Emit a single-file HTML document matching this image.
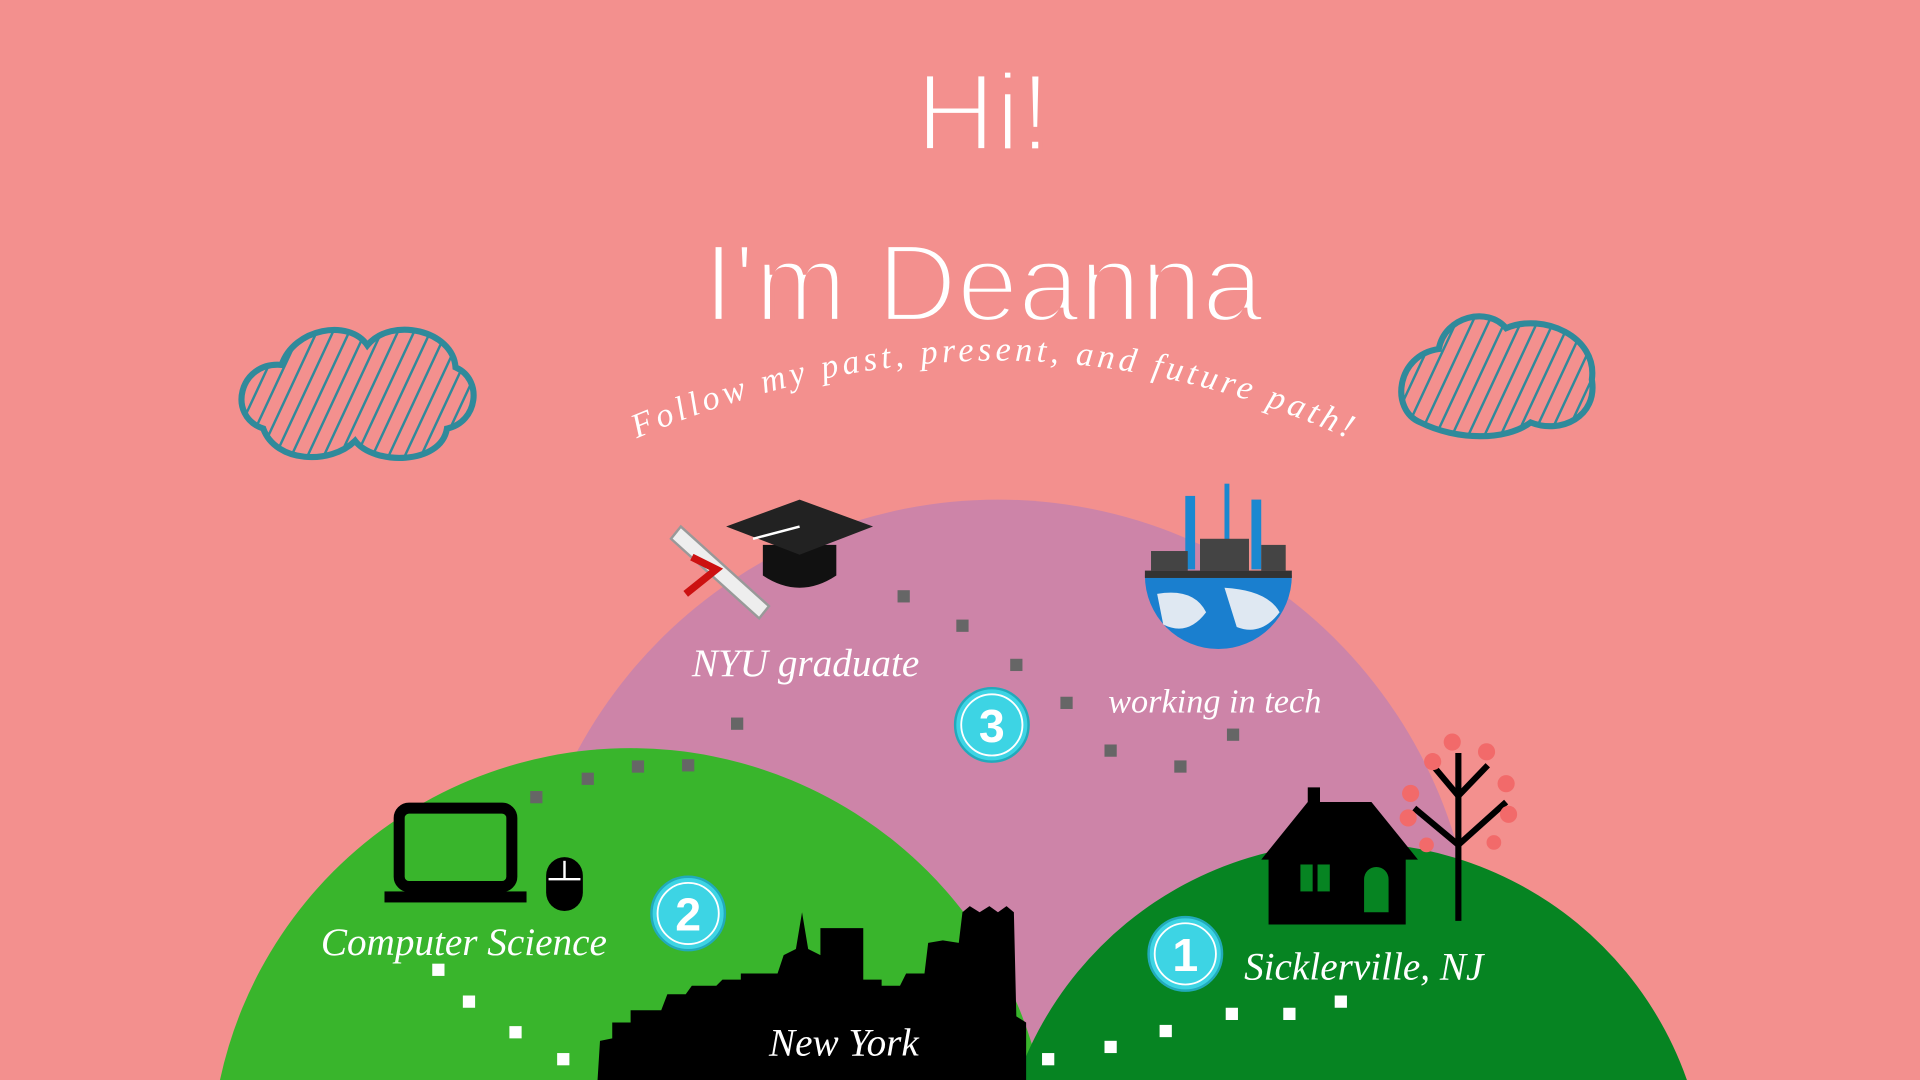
<!DOCTYPE html>
<html><head><meta charset="utf-8"><style>
html,body{margin:0;padding:0;width:1920px;height:1080px;overflow:hidden;background:#f3908e}
svg{display:block}
</style></head><body>
<svg width="1920" height="1080" viewBox="0 0 1568 882" xmlns="http://www.w3.org/2000/svg" style="position:absolute;left:0;top:0">
<defs>
<pattern id="hatch" width="12" height="12" patternUnits="userSpaceOnUse" patternTransform="rotate(25)">
<rect width="12" height="12" fill="#f3908e"/><line x1="0" y1="0" x2="0" y2="12" stroke="#2f8a9b" stroke-width="4"/>
</pattern>
<path id="arc" d="M520,358 Q820,230 1105,360"/>
</defs>
<rect width="1568" height="882" fill="#f3908e"/>
<circle cx="815" cy="798" r="390" fill="#cd84a8"/>
<circle cx="515" cy="954" r="343" fill="#39b52c"/>
<circle cx="1104" cy="978" r="290" fill="#068422"/>
<g font-family="Liberation Sans, sans-serif" fill="#fff" stroke="#f3908e" stroke-width="3.5" text-anchor="middle">
<text x="803" y="123" font-size="90">Hi!</text>
<text x="803" y="262" font-size="90">I'm Deanna</text>
</g>
<text font-family="Liberation Serif, serif" font-style="italic" font-size="28" fill="#fff" letter-spacing="1"><textPath href="#arc" textLength="600">Follow  my  past,  present,  and  future path!</textPath></text>
<g stroke="#2f8a9b" stroke-width="5" fill="url(#hatch)">
<path d="M215,350 C185,340 195,295 230,298 C240,268 285,260 300,282 C320,258 370,270 372,300 C395,310 390,345 365,350 C360,380 305,380 290,360 C270,380 225,378 215,350 Z"/>
<path d="M1160,345 C1135,335 1140,290 1175,285 C1180,258 1215,250 1230,268 C1260,255 1305,275 1300,310 C1305,340 1275,355 1250,345 C1230,360 1190,360 1160,345 Z"/>
</g>
<g fill="#666">
<rect x="733" y="482" width="10" height="10"/><rect x="781" y="506" width="10" height="10"/><rect x="825" y="538" width="10" height="10"/><rect x="866" y="569" width="10" height="10"/><rect x="902" y="608" width="10" height="10"/><rect x="959" y="621" width="10" height="10"/><rect x="1002" y="595" width="10" height="10"/><rect x="597" y="586" width="10" height="10"/><rect x="557" y="620" width="10" height="10"/><rect x="516" y="621" width="10" height="10"/><rect x="475" y="631" width="10" height="10"/><rect x="433" y="646" width="10" height="10"/>
</g>
<g fill="#fff">
<rect x="353" y="787" width="10" height="10"/><rect x="378" y="813" width="10" height="10"/><rect x="416" y="838" width="10" height="10"/><rect x="455" y="860" width="10" height="10"/><rect x="851" y="860" width="10" height="10"/><rect x="902" y="850" width="10" height="10"/><rect x="947" y="837" width="10" height="10"/><rect x="1001" y="823" width="10" height="10"/><rect x="1048" y="823" width="10" height="10"/><rect x="1090" y="813" width="10" height="10"/>
</g>
<path fill="#000" d="M488,882 L490,850 L500,848 L500,835 L515,835 L515,825 L540,825 L545,812 L560,812 L565,805 L585,805 L590,800 L605,800 L605,795 L635,795 L640,780 L650,775 L655,745 L660,775 L670,780 L670,758 L705,758 L705,800 L720,800 L720,805 L735,805 L740,795 L755,795 L758,770 L770,768 L783,770 L786,745 L792,740 L800,745 L808,740 L815,745 L822,740 L828,745 L830,830 L838,835 L838,882 Z"/>
<rect x="326" y="660" width="92" height="64" rx="8" fill="none" stroke="#000" stroke-width="9"/>
<rect x="314" y="728" width="116" height="9" fill="#000"/>
<rect x="446" y="700" width="30" height="44" rx="15" fill="#000"/>
<line x1="461" y1="703" x2="461" y2="718" stroke="#fff" stroke-width="2"/><line x1="448" y1="718" x2="474" y2="718" stroke="#fff" stroke-width="2"/>
<path fill="#000" d="M1030,702 L1068,655 L1068,643 L1078,643 L1078,655 L1120,655 L1158,702 L1148,702 L1148,755 L1036,755 L1036,702 Z"/>
<rect x="1062" y="706" width="10" height="22" fill="#068422"/><rect x="1076" y="706" width="10" height="22" fill="#068422"/>
<path d="M1114,745 L1114,718 A10,10 0 0 1 1134,718 L1134,745 Z" fill="#068422"/>
<g stroke="#000" stroke-width="5" fill="none">
<line x1="1191" y1="752" x2="1191" y2="615"/><line x1="1191" y1="690" x2="1155" y2="660"/><line x1="1191" y1="690" x2="1230" y2="655"/><line x1="1191" y1="650" x2="1170" y2="625"/><line x1="1191" y1="650" x2="1215" y2="625"/>
</g>
<g fill="#f26a6a">
<circle cx="1186" cy="606" r="7"/><circle cx="1170" cy="622" r="7"/><circle cx="1214" cy="614" r="7"/><circle cx="1152" cy="648" r="7"/><circle cx="1230" cy="640" r="7"/><circle cx="1150" cy="668" r="7"/><circle cx="1232" cy="665" r="7"/><circle cx="1165" cy="690" r="6"/><circle cx="1220" cy="688" r="6"/>
</g>
<path d="M548,440 L620,505 L628,495 L556,430 Z" fill="#eee" stroke="#999" stroke-width="2"/>
<path d="M565,455 L585,465 L560,485" stroke="#c11" stroke-width="6" fill="none"/>
<path d="M623,445 L683,445 L683,470 Q653,490 623,470 Z" fill="#111"/>
<path d="M593,430 L653,408 L713,430 L653,453 Z" fill="#222"/>
<line x1="653" y1="430" x2="615" y2="440" stroke="#fff" stroke-width="2"/>
<path d="M935,470 A60,60 0 0 0 1055,470 Z" fill="#1a7fcf"/>
<path d="M945,485 Q975,480 985,500 Q970,520 950,510 Z M1000,480 Q1035,482 1045,500 Q1030,520 1010,512 Z" fill="#dfe8f2"/>
<g fill="#1a88d0"><rect x="968" y="405" width="8" height="60"/><rect x="1022" y="408" width="8" height="57"/><rect x="1000" y="395" width="4" height="60"/></g>
<g fill="#444"><rect x="940" y="450" width="30" height="16"/><rect x="980" y="440" width="40" height="26"/><rect x="1030" y="445" width="20" height="21"/></g>
<rect x="935" y="466" width="120" height="6" fill="#333"/>
<g font-family="Liberation Sans, sans-serif" font-weight="bold" font-size="38" fill="#fff" text-anchor="middle">
<circle cx="968" cy="779" r="30" fill="#3dd4e4" stroke="#2ab" stroke-width="2"/><circle cx="968" cy="779" r="25" fill="none" stroke="#fff" stroke-width="1.5"/><text x="968" y="793">1</text>
<circle cx="562" cy="746" r="30" fill="#3dd4e4" stroke="#2ab" stroke-width="2"/><circle cx="562" cy="746" r="25" fill="none" stroke="#fff" stroke-width="1.5"/><text x="562" y="760">2</text>
<circle cx="810" cy="592" r="30" fill="#3dd4e4" stroke="#2ab" stroke-width="2"/><circle cx="810" cy="592" r="25" fill="none" stroke="#fff" stroke-width="1.5"/><text x="810" y="606">3</text>
</g>
<g font-family="Liberation Serif, serif" font-style="italic" fill="#fff" font-size="32">
<text x="565" y="552">NYU graduate</text>
<text x="905" y="582" font-size="28">working in tech</text>
<text x="262" y="780">Computer Science</text>
<text x="628" y="862">New York</text>
<text x="1016" y="800">Sicklerville, NJ</text>
</g>
</svg>
</body></html>
